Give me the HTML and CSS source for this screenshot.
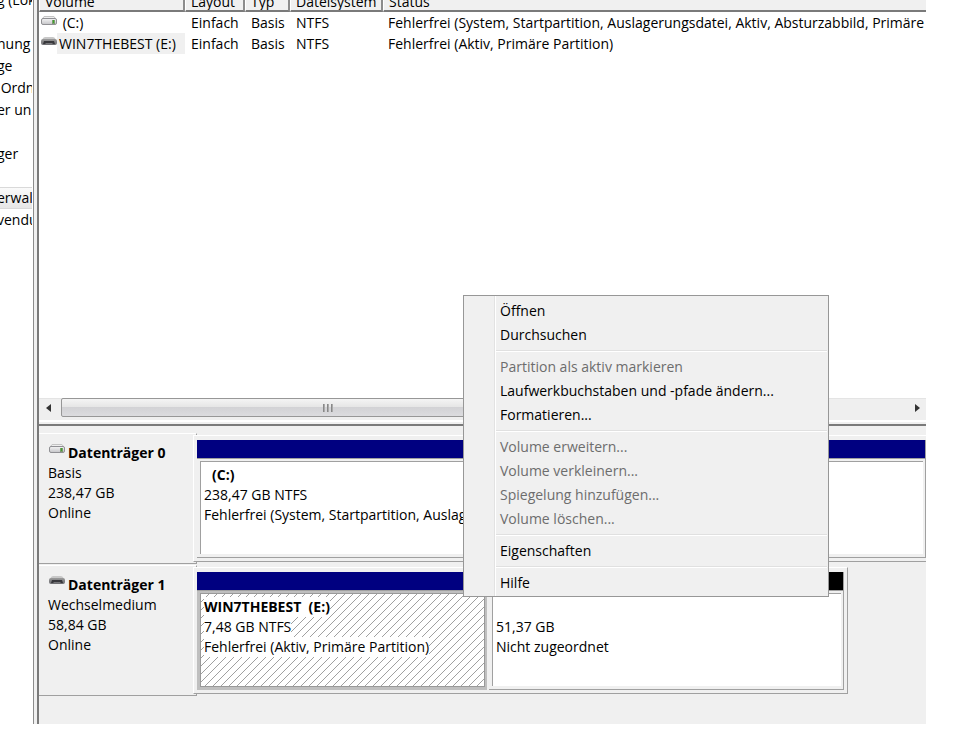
FILE: index.html
```
<!DOCTYPE html>
<html lang="de">
<head>
	<meta charset="UTF-8">
	<title>Datenträgerverwaltung</title>
	<link rel="stylesheet" href="styles.css">
</head>
<body>
	<!-- shared icons -->
	<svg class="defs" width="0" height="0">
		<defs>
			<linearGradient id="silver" x1="0" y1="0" x2="0" y2="1">
				<stop offset="0" stop-color="#f4f4f4"/>
				<stop offset="1" stop-color="#c4c4c8"/>
			</linearGradient>
			<linearGradient id="dark" x1="0" y1="0" x2="0" y2="1">
				<stop offset="0" stop-color="#9a9a9a"/>
				<stop offset="1" stop-color="#6c6c70"/>
			</linearGradient>
			<symbol id="hdd" viewBox="0 0 16 10">
				<path d="M3 0.500h10l2 3H1z" fill="#eee" stroke="#c4c4c4"/>
				<rect x="0.500" y="2.500" width="15" height="6" rx="1.500" fill="url(#silver)" stroke="#909094"/>
				<rect x="11" y="4" width="3" height="4" fill="#7d9a70"/>
				<rect x="12" y="4" width="1" height="3" fill="#3fa62c"/>
			</symbol>
			<symbol id="usb" viewBox="0 0 16 10">
				<path d="M4 0h8q2 0 3 3H1q1-3 3-3z" fill="#c8c8c8"/>
				<path d="M0 4q0-2 2-2h12q2 0 2 2v2q0 2-2 2H2Q0 8 0 6z" fill="url(#dark)"/>
				<path d="M3 4h10l1 3h-2l-1-1H5L4 7H2z" fill="#38383c"/>
			</symbol>
		</defs>
	</svg>

	<div class="app">
		<ul class="tree">
			<li>g (Lok</li>
			<li></li>
			<li>nung</li>
			<li>ge</li>
			<li>&nbsp;Ordn</li>
			<li>er un</li>
			<li></li>
			<li>ger</li>
			<li></li>
			<li class="active">erwal</li>
			<li>vendu</li>
		</ul>
		<div class="splitter"></div>

		<div class="main">
			<div class="list">
				<table>
					<colgroup>
						<col class="c-volume"><col class="c-layout"><col class="c-typ"><col class="c-fs"><col>
					</colgroup>
					<thead>
						<tr>
							<th><div>Volume</div></th>
							<th><div>Layout</div></th>
							<th><div>Typ</div></th>
							<th><div>Dateisystem</div></th>
							<th><div>Status</div></th>
						</tr>
					</thead>
					<tbody>
						<tr>
							<td><div class="vol"><svg class="icon"><use href="#hdd"/></svg><span>&nbsp;(C:)</span></div></td>
							<td>Einfach</td>
							<td>Basis</td>
							<td>NTFS</td>
							<td>Fehlerfrei (System, Startpartition, Auslagerungsdatei, Aktiv, Absturzabbild, Primäre</td>
						</tr>
						<tr>
							<td><div class="vol sel"><svg class="icon"><use href="#usb"/></svg><span>WIN7THEBEST (E:)</span></div></td>
							<td>Einfach</td>
							<td>Basis</td>
							<td>NTFS</td>
							<td>Fehlerfrei (Aktiv, Primäre Partition)</td>
						</tr>
					</tbody>
				</table>
			</div>

			<div class="scrollbar">
				<button class="arrow" aria-label="Links"><svg width="5" height="8"><path d="M5 0v8L0 4z" fill="#333"/></svg></button>
				<div class="track"><div class="thumb"><i></i><i></i><i></i></div></div>
				<button class="arrow" aria-label="Rechts"><svg width="5" height="8"><path d="M0 0v8l5-4z" fill="#333"/></svg></button>
			</div>

			<div class="disks">
				<div class="disk">
					<div class="label">
						<h2><svg class="icon"><use href="#hdd"/></svg>Datenträger 0</h2>
						<p>Basis</p>
						<p>238,47 GB</p>
						<p>Online</p>
					</div>
					<div class="parts full">
						<div class="part">
							<div class="bar"></div>
							<div class="box">
								<b class="indent">(C:)</b>
								<span>238,47 GB NTFS</span>
								<span>Fehlerfrei (System, Startpartition, Auslag</span>
							</div>
						</div>
					</div>
				</div>

				<div class="disk">
					<div class="label">
						<h2><svg class="icon"><use href="#usb"/></svg>Datenträger 1</h2>
						<p>Wechselmedium</p>
						<p>58,84 GB</p>
						<p>Online</p>
					</div>
					<div class="parts removable">
						<div class="part selected">
							<div class="bar"></div>
							<div class="box">
								<b>WIN7THEBEST&nbsp; (E:)</b>
								<span>7,48 GB NTFS</span>
								<span>Fehlerfrei (Aktiv, Primäre Partition)</span>
							</div>
						</div>
						<div class="part free">
							<div class="bar"></div>
							<div class="box">
								<b>&nbsp;</b>
								<span>51,37 GB</span>
								<span>Nicht zugeordnet</span>
							</div>
						</div>
					</div>
				</div>
			</div>
		</div>

		<div class="menu">
			<div class="group">
				<button>Öffnen</button>
				<button>Durchsuchen</button>
			</div>
			<div class="group">
				<button disabled>Partition als aktiv markieren</button>
				<button>Laufwerkbuchstaben und -pfade ändern...</button>
				<button>Formatieren...</button>
			</div>
			<div class="group">
				<button disabled>Volume erweitern...</button>
				<button disabled>Volume verkleinern...</button>
				<button disabled>Spiegelung hinzufügen...</button>
				<button disabled>Volume löschen...</button>
			</div>
			<div class="group">
				<button>Eigenschaften</button>
			</div>
			<div class="group">
				<button>Hilfe</button>
			</div>
		</div>
	</div>
</body>
</html>
```
FILE: styles.css
```
* {margin: 0;padding: 0;box-sizing: border-box;}
body {background: #fff;color: #000;font: 14px/20px "Open Sans", "Noto Sans", sans-serif;padding: 0 31px 21px 0;}
button {font: inherit;color: inherit;background: none;border: none;}
ul {list-style: none;}
.defs {position: absolute;}
.icon {width: 16px;height: 10px;flex: none;}

.app {display: flex;position: relative;min-height: calc(100vh - 21px);overflow: hidden;}

/* tree on the left */
.tree {width: 33px;flex: none;margin-top: -11px;overflow: hidden;}
.tree li {height: 22px;line-height: 22px;width: 32px;text-indent: -3px;white-space: nowrap;overflow: hidden;}
.tree .active {background: linear-gradient(#fafafa, #e6e6e6);border: solid #d9d9d9;border-width: 1px 0;line-height: 20px;}
.splitter {width: 6px;flex: none;background: #f0f0f0;border-left: 1px solid #8c8c8c;border-right: 2px solid #7a7a7a;}

.main {flex: 1;min-width: 0;display: flex;flex-direction: column;background: #f0f0f0;}

/* volume list */
.list {height: 398px;background: #fff;overflow: hidden;}
.list table {width: 100%;table-layout: fixed;border-collapse: separate;border-spacing: 0;}
.c-volume {width: 146px;}
.c-layout {width: 60px;}
.c-typ {width: 45px;}
.c-fs {width: 93px;}
.list th {font-weight: normal;text-align: left;background: #f0f0f0;border-bottom: 2px solid #7a7a7a;border-right: 2px solid #8c8c8c;border-left: 1px solid #fff;}
.list th:last-child {border-right: none;}
.list th div {display: flex;align-items: flex-end;height: 10px;line-height: 16px;padding-left: 5px;overflow: hidden;}
.list td {height: 21px;line-height: 21px;padding-left: 6px;white-space: nowrap;overflow: hidden;}
.list td:first-child {padding-left: 2px;}
.list td:last-child {padding-left: 5px;}
.vol {display: flex;}
.vol .icon {margin-top: 4px;}
.vol span {flex: 1;padding-left: 2px;}
.vol.sel span {background: #f0f0f0;}

/* horizontal scrollbar */
.scrollbar {display: flex;height: 28px;border-bottom: 2px solid #7a7a7a;background: linear-gradient(#e4e4e4 1px, #efefef 1px, #efefef 22px, #fff 22px, #fff 24px, #f0f0f0 24px);}
.arrow {width: 18px;height: 19px;flex: none;display: flex;align-items: center;justify-content: center;}
.track {flex: 1;padding-left: 4px;}
.thumb {width: 63%;height: 19px;border: 1px solid #979797;border-radius: 2px;background: linear-gradient(#f4f4f4, #e6e6e6 45%, #d2d2d5 50%, #dcdcdf);display: flex;align-items: center;justify-content: center;gap: 2px;}
.thumb i {width: 2px;height: 8px;background: linear-gradient(90deg, #777, #bbb);}

/* disks */
.disks {padding-top: 7px;}
.disk {display: flex;height: 132px;}
.label {width: 158px;flex: none;height: 131px;padding: 9px 0 0 9px;border-top: 1px solid #fff;border-right: 1px dashed #a0a0a0;border-bottom: 1px solid #a0a0a0;}
.label h2 {display: flex;font-size: 14px;line-height: 20px;}
.label .icon {margin: 1px 3px 0 1px;}
.parts {display: flex;height: 127px;margin: 2px 0 0 -4px;padding: 4px 3px 3px;gap: 2px;background: #f0f0f0;border: 1px solid;border-color: #fff #a0a0a0 #a0a0a0 #fff;}
.parts.full {flex: 1;min-width: 0;padding-right: 0;border-right: none;}
.parts.removable {width: 655px;}
.part {flex: 1;min-width: 0;display: flex;flex-direction: column;border: solid #a0a0a0;border-width: 0 1px 1px 0;}
.bar {height: 19px;background: #000080;border-bottom: 1px solid #a0a0a0;}
.box {flex: 1;margin: 2px 2px 3px 3px;padding: 3px;background: #fff;border: solid #a0a0a0;border-width: 1px 0 0 1px;white-space: nowrap;overflow: hidden;}
.box b, .box span {display: table;background: #fff;}
.box .indent {padding-left: 8px;}
.part.selected {flex: none;width: 290px;background: #bfbfbf;border: none;}
.selected .box {border: 1px solid #999;background: linear-gradient(135deg, #fff 46%, #a0a0a0 48%, #a0a0a0 52%, #fff 54%) 0 0 / 8px 8px;}
.free .bar {background: #000;}

/* context menu */
.menu {position: absolute;left: 463px;top: 295px;width: 366px;padding: 3px 1px 1px;background: linear-gradient(90deg, #f0f0f0 30px, #e2e2e2 30px, #e2e2e2 31px, #fff 31px, #fff 32px, #f0f0f0 32px);border: 1px solid #979797;}
.group + .group {padding-top: 3px;}
.group + .group::before {content: "";display: block;height: 1px;margin: 0 0 3px 31px;background: #fff;border-top: 1px solid #e0e0e0;}
.menu button {display: block;width: 100%;height: 24px;padding-left: 35px;text-align: left;}
.menu button:disabled {color: #6d6d6d;}
```
